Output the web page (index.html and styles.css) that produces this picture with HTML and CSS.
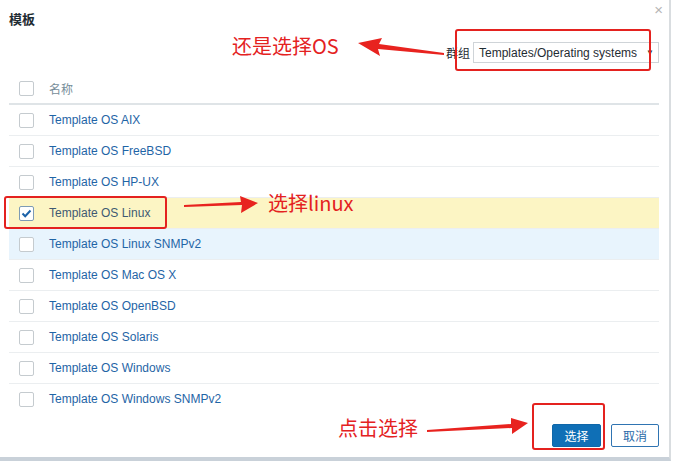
FILE: index.html
```html
<!DOCTYPE html>
<html lang="zh-CN">

<head>
    <meta charset="UTF-8" />
    <title>模板</title>
    <link rel="stylesheet" href="styles.css">
</head>

<body>

    <div class="dialog">
        <div class="dialog-head">
            <h4 class="dialog-title">模板</h4>
            <span class="close-btn">&times;</span>
        </div>

        <div class="filter">
            <label class="filter-label">群组</label>
            <div class="fake-select">
                <span>Templates/Operating systems</span>
                <span class="caret">&#9660;</span>
            </div>
        </div>

        <table class="list">
            <thead>
                <tr>
                    <th class="cell-check"><span class="checkbox"></span></th>
                    <th>名称</th>
                </tr>
            </thead>
            <tbody>
                <tr><td class="cell-check"><span class="checkbox"></span></td><td><a href="#">Template OS AIX</a></td></tr>
                <tr><td class="cell-check"><span class="checkbox"></span></td><td><a href="#">Template OS FreeBSD</a></td></tr>
                <tr><td class="cell-check"><span class="checkbox"></span></td><td><a href="#">Template OS HP-UX</a></td></tr>
                <tr class="row-selected">
                    <td class="cell-check">
                        <span class="checkbox checked">
                            <svg width="11" height="9" viewBox="0 0 11 9"><path d="M1.5 4.5 L4.2 7.2 L9.5 1.5" fill="none" stroke="#1b62a8" stroke-width="2" /></svg>
                        </span>
                    </td>
                    <td><a href="#">Template OS Linux</a></td>
                </tr>
                <tr class="row-hover"><td class="cell-check"><span class="checkbox"></span></td><td><a href="#">Template OS Linux SNMPv2</a></td></tr>
                <tr><td class="cell-check"><span class="checkbox"></span></td><td><a href="#">Template OS Mac OS X</a></td></tr>
                <tr><td class="cell-check"><span class="checkbox"></span></td><td><a href="#">Template OS OpenBSD</a></td></tr>
                <tr><td class="cell-check"><span class="checkbox"></span></td><td><a href="#">Template OS Solaris</a></td></tr>
                <tr><td class="cell-check"><span class="checkbox"></span></td><td><a href="#">Template OS Windows</a></td></tr>
                <tr class="row-last"><td class="cell-check"><span class="checkbox"></span></td><td><a href="#">Template OS Windows SNMPv2</a></td></tr>
            </tbody>
        </table>

        <div class="dialog-foot">
            <button class="btn btn-primary">选择</button>
            <button class="btn btn-alt">取消</button>
        </div>
    </div>

    <!-- annotations drawn on top of the screenshot -->
    <div class="mark box-group"></div>
    <div class="note note-group">还是选择OS</div>
    <svg class="arrow arrow-group" width="90" height="22" viewBox="0 0 90 22">
        <polygon points="0,5 24,0 21,6 86,15 86,17 20,11 22,18" fill="#e8231f" />
    </svg>

    <div class="mark box-linux"></div>
    <div class="note note-linux">选择linux</div>
    <svg class="arrow arrow-linux" width="76" height="20" viewBox="0 0 76 20">
        <polygon points="0,10 0,12 58,10 57,18 74,8 56,1 57,7" fill="#e8231f" />
    </svg>

    <div class="mark box-submit"></div>
    <div class="note note-submit">点击选择</div>
    <svg class="arrow arrow-submit" width="102" height="20" viewBox="0 0 102 20">
        <polygon points="0,13 0,15 85,11 85,17 101,6 84,1 84,7" fill="#e8231f" />
    </svg>

</body>

</html>
```

FILE: styles.css
```css
body {
    margin: 0;
    background-color: #ffffff;
    font-family: "Liberation Sans", Arial, "Noto Sans CJK SC", sans-serif;
    font-size: 12px;
    color: #1f2c33;
}

.dialog {
    position: relative;
    width: 671px;
    height: 461px;
    padding: 0 10px 0 9px;
    box-sizing: border-box;
    border-right: 2px solid #d9dde0;
    border-bottom: 4px solid #c9d1d9;
    background-color: #ffffff;
}

.dialog-head {
    height: 33px;
    display: flex;
    align-items: center;
}

.dialog-title {
    margin: 0;
    padding-top: 3px;
    font-size: 13px;
    font-weight: bold;
    color: #1f2c33;
}

.close-btn {
    position: absolute;
    top: 1px;
    right: 6px;
    font-size: 15px;
    color: #b5b5b5;
}

.filter {
    display: flex;
    justify-content: flex-end;
    align-items: center;
    margin-top: 9px;
    height: 21px;
}

.filter-label {
    margin-right: 3px;
    color: #1f2c33;
}

.fake-select {
    display: flex;
    justify-content: space-between;
    align-items: center;
    width: 186px;
    height: 21px;
    box-sizing: border-box;
    padding: 0 4px 0 5px;
    border: 1px solid #cfd4d8;
    background-color: #ffffff;
    color: #1f2c33;
}

.fake-select .caret {
    font-size: 8px;
    color: #333;
}

.list {
    width: 650px;
    margin-top: 10px;
    border-collapse: collapse;
}

.list th {
    height: 30px;
    padding: 0;
    text-align: left;
    font-weight: normal;
    color: #768d99;
    border-bottom: 2px solid #dfe4e7;
}

.list td {
    height: 30px;
    padding: 0;
    border-bottom: 1px solid #ebeef0;
}

.list .row-last td {
    border-bottom: none;
}

.list .cell-check {
    width: 30px;
    padding-left: 10px;
}

.checkbox {
    display: flex;
    justify-content: center;
    align-items: center;
    width: 15px;
    height: 15px;
    box-sizing: border-box;
    border: 1px solid #c5cbcf;
    border-radius: 2px;
    background-color: #ffffff;
}

.checkbox.checked {
    border-color: #7d9bb5;
}

.list a {
    color: #1f65a6;
    text-decoration: none;
}

.row-selected td {
    background-color: #fcf5c4;
}

.row-selected a {
    color: #3f5a72;
}

.row-hover td {
    background-color: #e8f4fd;
}

.dialog-foot {
    display: flex;
    justify-content: flex-end;
    gap: 10px;
    margin-top: 10px;
}

.btn {
    height: 23px;
    padding: 0;
    border-radius: 2px;
    font-family: "Liberation Sans", Arial, "Noto Sans CJK SC", sans-serif;
    font-size: 12px;
    cursor: pointer;
}

.btn-primary {
    width: 49px;
    border: 1px solid #0f67a9;
    background-color: #0f6fb6;
    color: #ffffff;
}

.btn-alt {
    width: 48px;
    border: 1px solid #2f74b2;
    background-color: #ffffff;
    color: #2a6aa8;
}

/* annotations */
.mark {
    position: absolute;
    border: 2px solid #e4221f;
    border-radius: 3px;
}

.box-group {
    left: 455px;
    top: 29px;
    width: 192px;
    height: 38px;
}

.box-linux {
    left: 4px;
    top: 196px;
    width: 159px;
    height: 29px;
}

.box-submit {
    left: 532px;
    top: 403px;
    width: 69px;
    height: 43px;
}

.note {
    position: absolute;
    font-family: "Noto Sans CJK SC", sans-serif;
    font-size: 20px;
    line-height: 24px;
    color: #e4221f;
}

.note-group {
    left: 232px;
    top: 34px;
}

.note-linux {
    left: 268px;
    top: 191px;
}

.note-submit {
    left: 338px;
    top: 416px;
}

.arrow {
    position: absolute;
}

.arrow-group {
    left: 358px;
    top: 38px;
}

.arrow-linux {
    left: 184px;
    top: 195px;
}

.arrow-submit {
    left: 427px;
    top: 417px;
}
```
